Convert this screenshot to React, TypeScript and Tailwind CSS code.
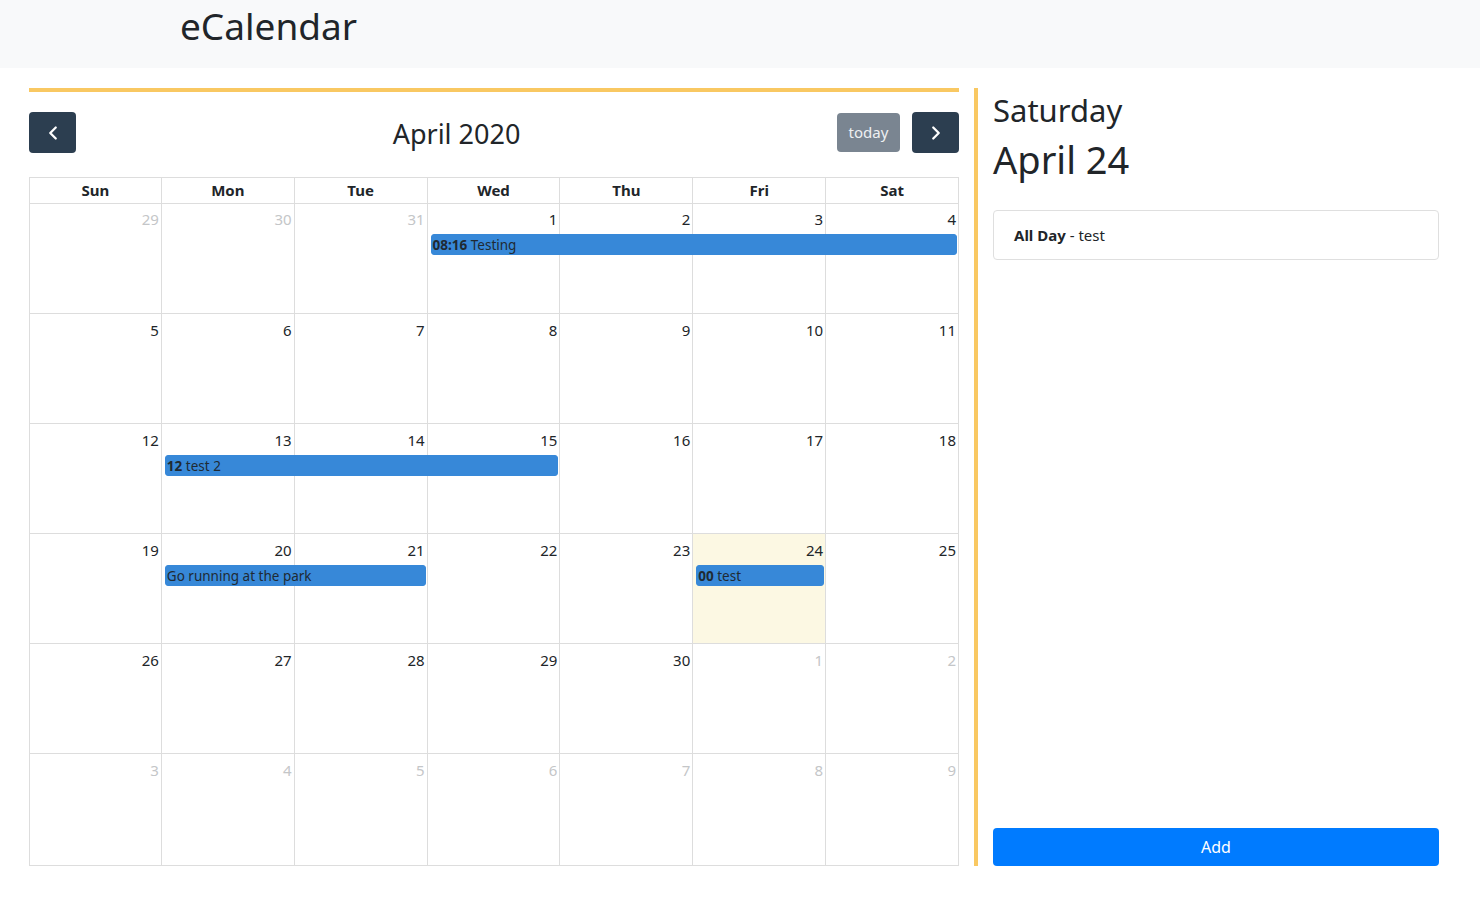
import { ChevronLeft, ChevronRight } from 'lucide-react';

type Day = { n: number; other?: boolean; today?: boolean };
type Ev = { col: string; time?: string; title: string };

const weeks: { days: Day[]; events: Ev[] }[] = [
  {
    days: [{ n: 29, other: true }, { n: 30, other: true }, { n: 31, other: true }, { n: 1 }, { n: 2 }, { n: 3 }, { n: 4 }],
    events: [{ col: 'col-start-4 col-span-4', time: '08:16', title: 'Testing' }],
  },
  { days: [5, 6, 7, 8, 9, 10, 11].map((n) => ({ n })), events: [] },
  {
    days: [12, 13, 14, 15, 16, 17, 18].map((n) => ({ n })),
    events: [{ col: 'col-start-2 col-span-3', time: '12', title: 'test 2' }],
  },
  {
    days: [19, 20, 21, 22, 23, 24, 25].map((n) => ({ n, today: n === 24 })),
    events: [
      { col: 'col-start-2 col-span-2', title: 'Go running at the park' },
      { col: 'col-start-6 col-span-1', time: '00', title: 'test' },
    ],
  },
  {
    days: [{ n: 26 }, { n: 27 }, { n: 28 }, { n: 29 }, { n: 30 }, { n: 1, other: true }, { n: 2, other: true }],
    events: [],
  },
  { days: [3, 4, 5, 6, 7, 8, 9].map((n) => ({ n, other: true })), events: [] },
];

const colStarts = ['col-start-1', 'col-start-2', 'col-start-3', 'col-start-4', 'col-start-5', 'col-start-6', 'col-start-7'];

const Week = ({ days, events, height }: { days: Day[]; events: Ev[]; height: string }) => (
  <div className={`grid grid-cols-7 grid-rows-[auto_auto_1fr] ${height}`}>
    {days.map((d, i) => (
      <div
        key={'bg' + i}
        className={`${colStarts[i]} row-start-1 row-span-3 border-r border-b border-[#ddd] ${i === 0 ? 'border-l' : ''} ${d.today ? 'bg-[#fcf8e3]' : ''}`}
      />
    ))}
    {days.map((d, i) => (
      <div
        key={'n' + i}
        className={`${colStarts[i]} row-start-1 text-right pr-[3px] pt-[4px] text-[15px] leading-[24px] ${d.other ? 'text-[#c4c6c8]' : 'text-[#212529]'}`}
      >
        {d.n}
      </div>
    ))}
    {events.map((e, i) => (
      <div
        key={'e' + i}
        className={`${e.col} row-start-2 ml-[3px] mr-[2px] mt-[3px] h-[21px] rounded-[3px] bg-[#3788d8] border border-[#3788d8] px-[1px] text-[13.5px] leading-[20px] text-[#1f2a33] whitespace-nowrap overflow-hidden`}
      >
        {e.time && <span className="font-bold">{e.time} </span>}
        {e.title}
      </div>
    ))}
  </div>
);

export default function App() {
  return (
    <div className="min-h-screen bg-white font-['Noto_Sans','Liberation_Sans',sans-serif] text-[#212529]">
      <div className="h-[68px] bg-[#f8f9fa] pl-[180px]">
        <h1 className="text-[37px] leading-[52px]">eCalendar</h1>
      </div>

      <div className="flex pt-5 pl-[29px]">
        <div className="w-[930px] border-t-4 border-[#f9c862]">
          <div className="flex items-center justify-between mt-5 h-[41px]">
            <button className="w-[47px] h-[41px] rounded-[4px] bg-[#2c3e50] text-white flex items-center justify-center">
              <ChevronLeft size={22} strokeWidth={2.5} />
            </button>
            <h2 className="text-[27px] leading-[41px] pt-[2px]">April 2020</h2>
            <div className="flex gap-3 items-center">
              <button className="w-[63px] h-[39px] rounded-[4px] bg-[#7a8591] text-[#eef0f2] text-[15px]">today</button>
              <button className="w-[47px] h-[41px] rounded-[4px] bg-[#2c3e50] text-white flex items-center justify-center">
                <ChevronRight size={22} strokeWidth={2.5} />
              </button>
            </div>
          </div>

          <div className="mt-6">
            <div className="grid grid-cols-7 h-[26px] border-t border-[#ddd]">
              {['Sun', 'Mon', 'Tue', 'Wed', 'Thu', 'Fri', 'Sat'].map((d, i) => (
                <div
                  key={d}
                  className={`border-r border-b border-[#ddd] ${i === 0 ? 'border-l' : ''} text-center font-bold text-[15px] leading-[25px]`}
                >
                  {d}
                </div>
              ))}
            </div>
            {weeks.map((w, i) => (
              <Week
                key={i}
                days={w.days}
                events={w.events}
                height={i === 0 ? 'h-[111px]' : i === weeks.length - 1 ? 'h-[112px]' : 'h-[110px]'}
              />
            ))}
          </div>
        </div>

        <div className="ml-[15px] border-l-4 border-[#f9c862] pl-[15px] w-[465px] h-[778px] flex flex-col">
          <div className="text-[31px] leading-[40px] mt-[2px]">Saturday</div>
          <div className="text-[38px] leading-[54px] mt-[2px]">April 24</div>
          <div className="mt-[24px] border border-[#dfdfdf] rounded-[4px] h-[50px] flex items-center px-5 text-[15px]">
            <span className="font-bold">All Day</span>
            <span>&nbsp;- test</span>
          </div>
          <button className="mt-auto h-[38px] rounded-[4px] bg-[#007bff] text-white text-[16px]">Add</button>
        </div>
      </div>
    </div>
  );
}
